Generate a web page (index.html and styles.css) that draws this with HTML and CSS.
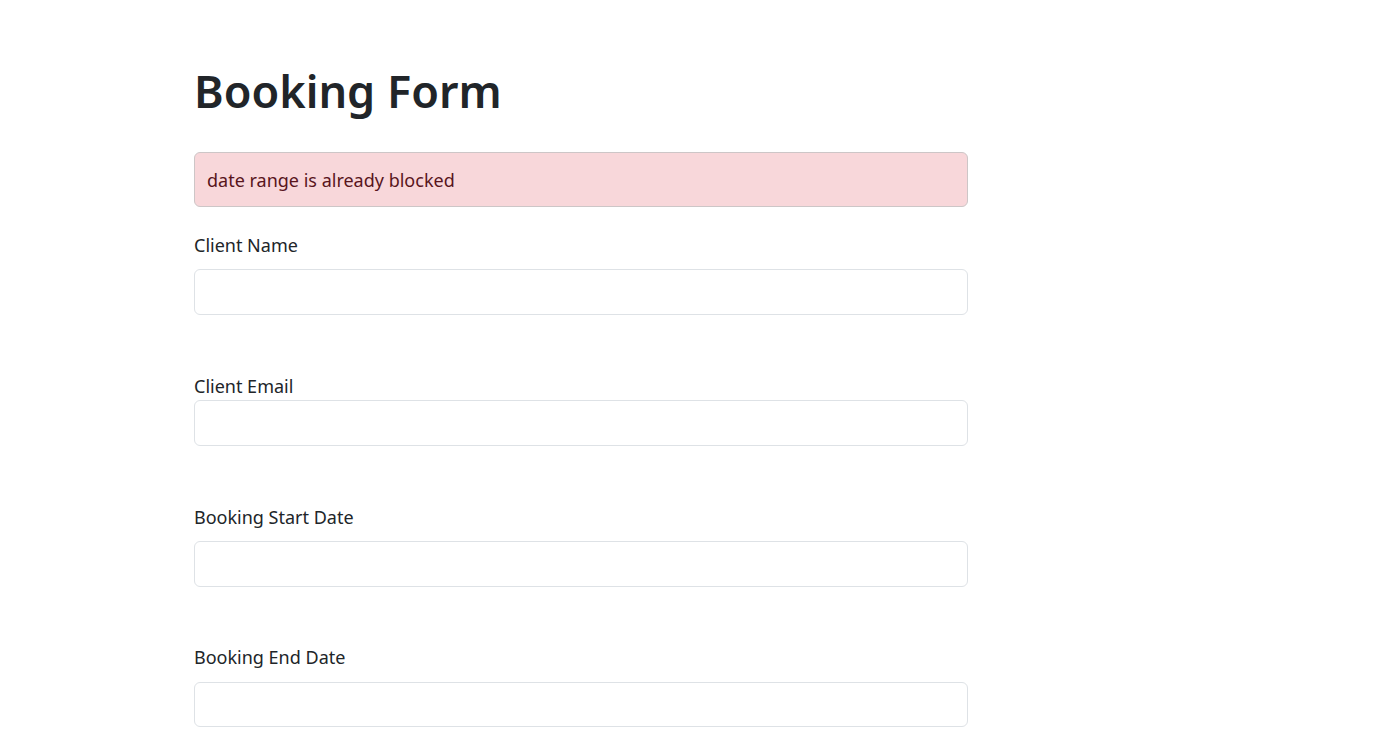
FILE: index.html
```html
<!DOCTYPE html>
<html lang="en">
<head>
<meta charset="utf-8">
<title>Booking Form</title>
<link rel="stylesheet" href="styles.css">
</head>
<body>
<main class="page">
  <h1 class="title">Booking Form</h1>
  <div class="alert">date range is already blocked</div>
  <form class="form">
    <div class="field">
      <label class="label" for="name">Client Name</label>
      <input class="control" id="name" type="text">
    </div>
    <div class="field">
      <label class="label label-tight" for="email">Client Email</label>
      <input class="control" id="email" type="email">
    </div>
    <div class="field">
      <label class="label" for="start">Booking Start Date</label>
      <input class="control" id="start" type="text">
    </div>
    <div class="field">
      <label class="label" for="end">Booking End Date</label>
      <input class="control" id="end" type="text">
    </div>
  </form>
</main>
</body>
</html>
```
FILE: styles.css
```css
html, body {
  margin: 0;
  padding: 0;
  background: #ffffff;
}
body {
  font-family: "Noto Sans", "Open Sans", sans-serif;
  font-size: 18px;
  line-height: 28.8px;
  color: #212529;
}
.page {
  width: 774px;
  margin-left: 194px;
  padding-top: 62px;
}
.title {
  margin: 0 0 32.4px;
  font-size: 45px;
  line-height: 57.6px;
  font-weight: 600;
  color: #212529;
}
.alert {
  box-sizing: border-box;
  height: 55px;
  padding: 13.5px 12px 10.5px;
  background: #f8d7da;
  border: 1px solid #cdc6c7;
  border-radius: 6px;
  color: #58151c;
  margin-bottom: 24px;
}
.form {
  display: flex;
  flex-direction: column;
}
.field {
  display: flex;
  flex-direction: column;
  margin-bottom: 56.6px;
}
.label {
  display: block;
  margin-bottom: 9.6px;
}
.label-tight {
  margin-bottom: 0;
}
.control {
  box-sizing: border-box;
  display: block;
  width: 100%;
  height: 45.6px;
  padding: 7px 14px;
  font: inherit;
  border: 1px solid #dee2e6;
  border-radius: 6px;
  background: #fff;
  outline: none;
}
```
